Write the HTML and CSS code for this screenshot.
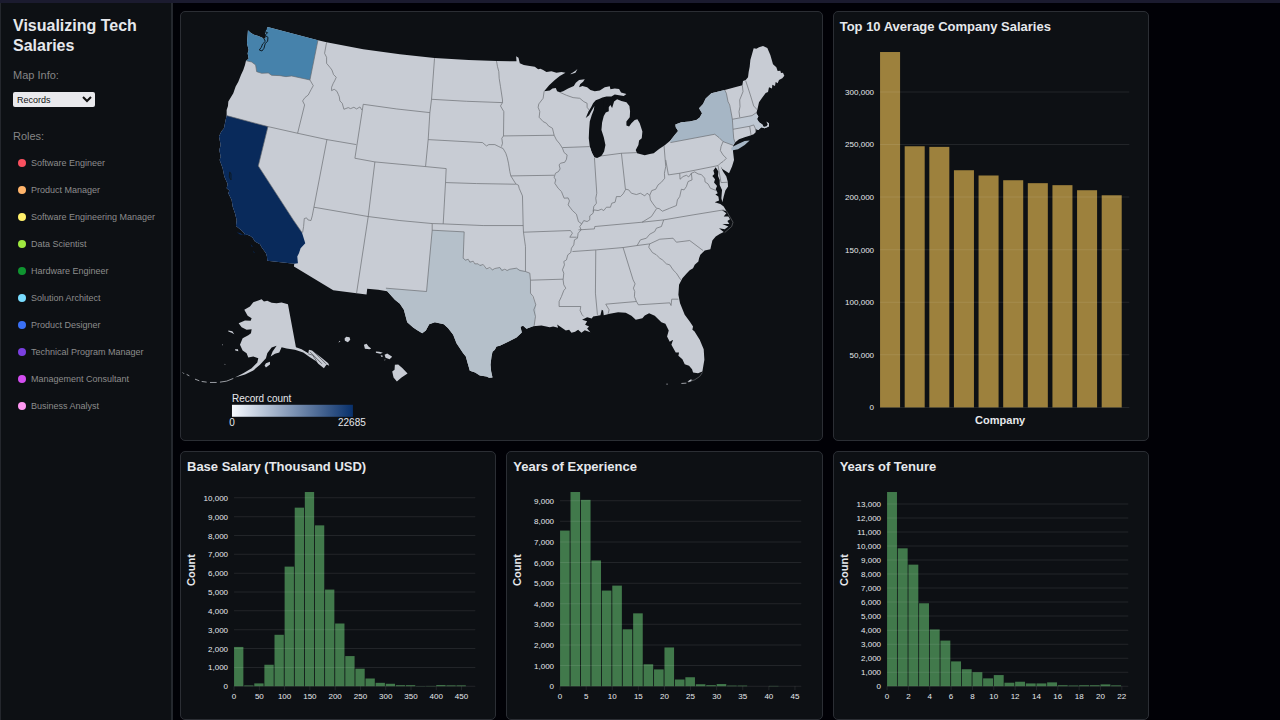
FILE: index.html
```html
<!DOCTYPE html>
<html lang="en">
<head>
<meta charset="utf-8">
<title>Visualizing Tech Salaries</title>
<link rel="stylesheet" href="styles.css">
</head>
<body>
<div class="app">
  <aside class="sidebar">
    <h1 class="app-title">Visualizing Tech Salaries</h1>
    <label class="field-label" for="map-info">Map Info:</label>
    <select class="map-select" id="map-info">
      <option>Records</option>
      <option>Salary</option>
    </select>
    <h2 class="field-label roles-label">Roles:</h2>
    <ul class="roles">
      <li class="role"><span class="dot dot-red"></span>Software Engineer</li>
      <li class="role"><span class="dot dot-orange"></span>Product Manager</li>
      <li class="role"><span class="dot dot-yellow"></span>Software Engineering Manager</li>
      <li class="role"><span class="dot dot-lime"></span>Data Scientist</li>
      <li class="role"><span class="dot dot-green"></span>Hardware Engineer</li>
      <li class="role"><span class="dot dot-cyan"></span>Solution Architect</li>
      <li class="role"><span class="dot dot-blue"></span>Product Designer</li>
      <li class="role"><span class="dot dot-purple"></span>Technical Program Manager</li>
      <li class="role"><span class="dot dot-magenta"></span>Management Consultant</li>
      <li class="role"><span class="dot dot-pink"></span>Business Analyst</li>
    </ul>
  </aside>
  <main class="dashboard">
    <section class="panel panel-map">
      <svg class="chart" viewBox="0 0 641 428" role="img" aria-label="Record count by state">
        <defs>
          <linearGradient id="ramp"><stop offset="0" stop-color="#f7fafe"/><stop offset="1" stop-color="#08306b"/></linearGradient>
        </defs>
        <g transform="translate(-181 -12) scale(0.33333)">
          <path class="land" d="M744,91 752,98 762,104 775,108 787,113 792,118 798,112 796,98 803,81 954,121 980,127 1090,148 1200,163 1304,174 1406,180 1490,183 1550,184 1549,169 1556,173 1560,190 1572,195 1590,198 1605,200 1615,208 1622,206 1630,210 1640,216 1655,214 1670,218 1685,216 1697,218 1680,228 1665,240 1648,256 1633,274 1650,272 1658,266 1668,264 1672,274 1680,277 1690,274 1705,266 1722,258 1728,248 1738,240 1755,238 1750,245 1741,253 1738,262 1748,258 1762,262 1772,270 1785,274 1800,272 1815,262 1830,259 1832,268 1845,266 1858,267 1864,278 1880,282 1872,288 1858,286 1845,284 1835,290 1820,290 1808,293 1798,297 1788,301 1780,310 1774,322 1766,335 1758,354 1768,346 1775,333 1784,318 1782,330 1776,345 1770,365 1768,390 1767,415 1770,440 1776,458 1784,472 1792,474 1805,468 1813,455 1817,435 1812,412 1805,390 1807,368 1812,348 1818,338 1827,334 1827,322 1832,315 1837,324 1843,305 1852,298 1865,303 1880,307 1889,318 1891,335 1890,352 1880,365 1880,377 1888,380 1895,370 1905,360 1913,358 1920,370 1928,395 1926,415 1918,422 1916,435 1908,450 1912,460 1935,466 1950,462 1962,460 1978,447 1995,436 2012,422 2025,405 2035,393 2028,382 2027,374 2045,367 2070,365 2090,360 2100,353 2107,340 2098,325 2110,312 2118,296 2135,280 2175,270 2228,256 2230,243 2238,240 2245,232 2247,215 2250,200 2252,180 2262,145 2270,146 2278,142 2290,138 2303,144 2312,165 2320,193 2330,202 2334,213 2342,212 2344,219 2350,218 2354,227 2348,235 2338,240 2334,250 2328,246 2326,258 2318,254 2317,266 2308,262 2305,276 2298,279 2288,293 2278,307 2274,325 2270,340 2276,350 2272,357 2278,367 2288,374 2292,381 2300,380 2304,374 2300,365 2308,370 2308,380 2295,385 2285,382 2276,390 2268,387 2268,397 2262,403 2252,407 2235,412 2218,418 2206,428 2200,438 2200,455 2203,480 2197,500 2188,520 2180,515 2168,507 2163,500 2170,515 2180,530 2184,545 2185,560 2177,572 2172,590 2168,607 2165,595 2167,570 2160,555 2160,540 2155,528 2156,515 2148,502 2141,512 2144,522 2138,528 2146,538 2143,548 2152,558 2148,568 2154,580 2147,584 2156,590 2158,602 2145,607 2162,612 2172,620 2180,633 2166,630 2180,640 2172,650 2186,650 2191,658 2183,663 2189,672 2168,672 2186,680 2175,688 2158,685 2172,696 2160,702 2148,710 2138,722 2135,735 2132,748 2115,752 2102,765 2098,775 2096,785 2085,795 2080,805 2070,811 2060,822 2048,835 2038,855 2036,885 2041,910 2055,945 2070,965 2080,980 2078,990 2084,994 2100,1020 2112,1048 2114,1080 2108,1115 2095,1120 2080,1118 2077,1108 2068,1098 2055,1093 2048,1078 2036,1068 2038,1058 2028,1058 2015,1035 2020,1020 2010,1026 2002,1010 2007,992 1997,972 1985,967 1965,948 1948,940 1935,947 1928,955 1908,960 1895,948 1878,939 1855,937 1830,942 1812,946 1810,932 1806,930 1802,946 1780,950 1776,956 1762,952 1747,960 1762,964 1756,975 1768,980 1762,986 1772,997 1755,991 1745,999 1735,990 1726,996 1715,999 1708,990 1698,992 1685,983 1672,974 1675,984 1660,980 1650,982 1625,977 1600,979 1580,987 1570,978 1562,981 1566,998 1550,1013 1525,1026 1500,1038 1490,1040 1485,1050 1478,1056 1475,1070 1472,1095 1474,1115 1478,1133 1468,1134 1460,1130 1440,1127 1426,1118 1410,1113 1402,1085 1398,1070 1390,1060 1370,1030 1360,1005 1345,985 1332,973 1305,967 1288,973 1278,992 1267,1000 1250,990 1240,983 1222,967 1216,945 1212,930 1200,912 1185,900 1162,874 1135,870 1102,867 1100,884 1070,880 1000,871 882,800 883,792 802,783 801,770 798,760 785,742 780,733 765,725 758,714 750,708 735,702 725,692 708,678 710,660 705,640 698,620 695,600 685,580 688,572 680,565 683,552 673,530 668,505 659,480 662,470 658,450 662,435 657,410 664,395 672,385 676,365 680,347 680,330 684,318 685,305 700,280 707,260 715,245 723,225 730,210 735,195 738,182 746,176 743,160 746,150 741,130Z"/>
          <path class="mass" d="M2198,358 2257,347 2270,340 2276,350 2272,357 2278,367 2288,374 2292,381 2300,380 2308,380 2295,385 2285,382 2276,390 2270,388 2262,375 2250,379 2200,388Z"/>
          <path class="illinois" d="M1688,443 1770,440 1776,458 1784,474 1791,580 1788,610 1780,635 1772,650 1762,665 1746,672 1736,665 1730,643 1707,620 1707,600 1693,595 1685,575 1665,550 1663,527 1676,515 1678,495 1695,485 1702,465Z"/>
          <path class="texas" d="M1297,691 1393,696 1390,775 1410,783 1425,792 1445,795 1460,807 1485,808 1500,803 1515,812 1530,808 1550,805 1577,815 1590,820 1592,880 1608,915 1607,950 1603,978 1580,987 1570,978 1562,981 1566,998 1550,1013 1525,1026 1500,1038 1490,1040 1485,1050 1478,1056 1475,1070 1472,1095 1474,1115 1478,1133 1468,1134 1460,1130 1440,1127 1426,1118 1410,1113 1402,1085 1398,1070 1390,1060 1370,1030 1360,1005 1345,985 1332,973 1305,967 1288,973 1278,992 1267,1000 1250,990 1240,983 1222,967 1216,945 1212,930 1200,912 1185,900 1162,874 1158,865 1280,875Z"/>
          <path class="newyork" d="M2012,428 2145,403 2158,413 2170,425 2200,436 2206,428 2202,415 2200,388 2198,358 2192,325 2185,305 2180,280 2175,270 2135,280 2118,296 2110,312 2098,325 2107,340 2100,353 2090,360 2070,365 2045,367 2027,374 2028,382 2035,393 2025,405 2012,422ZM2194,444 2196,452 2215,448 2235,435 2250,422 2235,423 2215,432 2200,440Z"/>
          <path class="washington" d="M744,91 752,98 762,104 775,108 787,113 792,118 798,112 796,98 803,81 954,121 930,240 875,228 858,230 840,227 815,226 805,219 785,220 770,215 767,195 755,186 738,182 746,176 743,160 746,150 741,130Z"/>
          <path class="california" d="M680,347 804,380 775,498 880,660 906,698 916,730 902,745 897,760 892,770 894,790 883,792 802,783 801,770 798,760 785,742 780,733 765,725 758,714 750,708 735,702 725,692 708,678 710,660 705,640 698,620 695,600 685,580 688,572 680,565 683,552 673,530 668,505 659,480 662,470 658,450 662,435 657,410 664,395 672,385 676,365ZM710,697l12,3 8,6-10-2zM730,702l10,2-6,3zM752,733l7,7-4,1zM760,752l5,8-4-2z"/>
          <path class="sound" d="M800,88 793,95 803,98 795,106 804,112 803,124 796,130 792,145 786,153 778,150 784,142 788,132 796,124 792,116M689,516l4,6 0,18-5-8z"/>
          <path class="water" d="M1812,300l8-6 6,6-6,14-4,20-8,6 4-16zM1833,292l14,0-8,10z"/>
          <path class="borders" d="M738,182 755,186 767,195 770,215 785,220 805,219 815,226 840,227 858,230 875,228 930,240M954,121 930,240 940,257 934,268 925,285 915,293 908,303 914,315 893,400M680,347 804,380 893,400 981,419 1069,434M804,380 775,498 880,660 906,698M981,419 942,622 937,648 933,662 924,660 920,654 913,656 911,680 908,698M942,622 1105,650 1200,662 1297,671 1330,672 1450,677 1570,677M1125,486 1105,650 1070,880M980,127 974,160 980,172 980,190 990,202 996,210 1001,224 1009,232 1004,243 1000,250 995,262 995,272 1003,268 1011,274 1015,283 1018,290 1020,303 1027,310 1032,328 1045,323 1052,326 1062,322 1070,327 1080,321 1086,330M1290,338 1190,327 1090,313 1065,475 1125,486 1200,493 1277,500 1339,506 1337,548 1330,672M1304,175 1295,298 1290,338 1285,419 1277,500M1295,298 1400,304 1508,308M1285,419 1448,428 1460,438 1467,434 1485,434 1497,440 1510,446 1518,460 1522,472 1526,490 1530,515 1533,528 1548,552 1556,556 1558,565 1568,588 1570,675 1571,697 1577,740 1577,815M1490,183 1493,200 1497,215 1498,235 1502,260 1508,300 1508,308 1502,318 1512,335 1511,408 1506,415 1508,430 1505,440M1511,408 1663,406M1337,548 1430,551 1548,553M1633,274 1630,295 1617,312 1615,322 1620,335 1618,352 1630,365 1640,370 1646,378 1658,385 1663,406 1670,420 1680,432 1688,445 1693,458 1702,465 1700,478 1695,487 1682,490 1678,495 1681,507 1676,515 1667,520 1663,532 1668,540 1665,550 1675,565 1685,575 1693,595 1705,594 1709,603 1705,615 1718,632 1730,643 1736,665 1746,672 1740,680 1744,690 1735,700 1733,715 1724,720 1722,735 1715,745 1713,758 1704,765 1700,780 1692,785 1694,795 1688,810 1692,820 1690,840 1692,855 1698,865 1692,872 1685,890 1678,905 1678,920 1743,920 1741,932 1747,945 1752,950M1533,528 1663,526M1688,443 1770,440M1680,277 1700,286 1720,293 1740,295 1752,305 1762,310 1762,322 1768,330M1784,474 1791,580 1788,595 1790,610 1782,620 1780,635M1746,672 1752,662 1762,665 1770,660 1770,648 1780,640 1782,630 1795,632 1805,628 1812,632 1820,622 1832,622 1836,610 1846,607 1850,590 1862,590 1870,582 1878,568 1887,570 1895,580 1910,584 1922,580 1935,588 1942,580 1950,586 1956,572 1968,568 1975,555 1985,547 1995,535 1994,520 1998,500 1993,438M1865,460 1877,568M1805,468 1865,460 1912,458M1998,480 2006,525 2040,520 2155,497M2012,428 2145,403 2158,413 2170,425 2164,440 2162,452 2170,465 2180,475 2170,485 2162,490 2155,497M2170,425 2200,436M2202,415 2200,388 2198,358 2192,325 2190,315 2185,305 2180,280 2175,270M2228,256 2230,275 2220,300 2221,320 2218,335 2220,352M2238,242 2252,285 2262,318 2273,330M2198,358 2257,347 2270,338M2200,388 2250,379 2262,375 2270,392M2250,379 2254,405M2202,415 2206,428M2040,520 2041,538 2050,530 2060,526 2067,531 2075,520 2085,516 2095,522 2105,524 2115,535 2116,546 2125,552 2132,565 2150,572M2075,520 2077,540 2065,545 2060,560 2053,570 2045,568 2040,590 2033,600 2030,617 2010,625 1988,634 1978,626 1970,625 1960,612 1952,600 1950,586M1970,627 1955,650 1927,667M1736,690 1784,687 1785,680 1927,667 1992,660 2080,645 2172,630M1992,660 1985,680 1970,685 1965,695 1950,703 1940,715 1922,720 1912,737M1718,755 1790,750 1870,743 1912,737 1950,732 1980,718 2020,715 2030,727 2070,722 2110,752M1950,732 1947,742 1958,758 1970,765 1980,775 1988,780 2000,792 2010,795 2020,810 2030,820 2043,840M1870,743 1900,840 1906,852 1901,865 1905,875 1904,890 1910,905 1916,915 2010,909 2014,917 2016,898 2036,898M1910,905 1818,913 1828,930 1825,942M1788,751 1787,880 1793,945M1571,697 1712,692 1718,700 1710,712 1731,712M1592,841 1690,838M1577,815 1590,820 1592,841 1592,880 1600,890 1608,915 1602,930 1607,950 1603,978M1390,775 1397,781 1405,778 1410,787 1420,784 1425,792 1435,792 1440,797 1450,794 1460,807 1470,803 1478,810 1485,806 1500,803 1506,812 1515,808 1522,812 1530,808 1550,805 1560,812 1577,815M1297,671 1297,691 1393,696 1390,775M1297,691 1280,875 1158,865M2155,497 2164,548 2184,547M2180,633 2200,667 2196,680 2175,698"/>
          <path class="land" d="M785,898 792,905 802,903 815,909 830,910 845,908 864,913 888,1042 905,1048 925,1060 927,1050 936,1052 960,1070 985,1090 988,1098 980,1094 972,1105 955,1092 950,1085 930,1072 910,1058 885,1050 860,1046 845,1042 838,1058 825,1062 812,1070 818,1055 830,1038 815,1043 802,1060 798,1075 780,1095 760,1112 735,1124 705,1133 730,1120 755,1105 772,1088 775,1075 760,1070 745,1073 740,1060 728,1052 720,1035 728,1015 745,1006 753,1000 755,988 740,990 725,982 716,970 735,962 752,963 755,955 743,948 733,930 750,920 760,907 775,902ZM798,1090l12-4 0,8-12,9-4-6zM685,992l12,2 6,9-8-4-10-4zM705,1048l9,0 1,6-9-2zM666,1033l3,2-2,2zM674,1092l3,3-3,0z"/>
          <path class="islands" d="M700,1136 680,1144 660,1147M650,1148 630,1148M620,1147 605,1145M598,1143 585,1138M568,1128 560,1124M552,1122 548,1118M2000,1153h4M2045,1151 2060,1150"/>
          <path class="keys" d="M2065,1147 2085,1140 2100,1130 2108,1118"/>
          <path class="land" d="M2063,1146 2072,1139 2078,1140 2071,1146ZM1712,222l14-9 7-6-6,11-14,5zM1034,1016l5-5 10,1 2,8-7,7-9-4zM1015,1028l5-5 1,3zM1092,1035l8-3 6,8 8,6-5,2-14-1zM1128,1055l10,1 11,3-8,3-13-3zM1142,1067l5-1 2,5-5,0zM1154,1065l8-4 15,10-8,7-12-4zM1153,1080l5,0-4,2zM1185,1095 1195,1094 1208,1105 1223,1121 1205,1133 1191,1145 1181,1133 1177,1115 1184,1110Z"/>
          <path class="channels" d="M930,1056 952,1078 966,1092M938,1052 960,1074 978,1092M925,1062 938,1066 950,1084"/>
        </g>
        <text class="legend-text" x="51" y="390">Record count</text>
        <rect x="51" y="393" width="121" height="12" fill="url(#ramp)"/>
        <text class="legend-text middle" x="51" y="414">0</text>
        <text class="legend-text middle" x="171" y="414">22685</text>
      </svg>
    </section>
    <section class="panel">
      <h2 class="panel-title">Top 10 Average Company Salaries</h2>
      <svg class="chart" id="companies" viewBox="0 0 314 404"></svg>
    </section>
    <section class="panel">
      <h2 class="panel-title">Base Salary (Thousand USD)</h2>
      <svg class="chart" id="salary" viewBox="0 0 314 242"></svg>
    </section>
    <section class="panel">
      <h2 class="panel-title">Years of Experience</h2>
      <svg class="chart" id="experience" viewBox="0 0 314 242"></svg>
    </section>
    <section class="panel">
      <h2 class="panel-title">Years of Tenure</h2>
      <svg class="chart" id="tenure" viewBox="0 0 314 242"></svg>
    </section>
  </main>
</div>
<script src="charts.js"></script>
</body>
</html>
```
FILE: styles.css
```css
* { box-sizing: border-box; }

body {
  margin: 0;
  background: #010106;
  color: #e6e8ec;
  font-family: "Liberation Sans", Arial, sans-serif;
}

.app {
  display: flex;
  min-height: 100vh;
  border-top: 3px solid #1b1b2f;
}

.sidebar {
  flex: 0 0 173px;
  padding: 13px 8px 12px 12px;
  background: #0d1014;
  border-left: 1px solid #24272d;
  border-right: 2px solid #24272d;
}

.app-title {
  margin: 0 0 12px;
  font-size: 16px;
  line-height: 20px;
}

.field-label {
  display: block;
  margin: 0;
  font-size: 11px;
  font-weight: 400;
  line-height: 14px;
  color: #858585;
}

.roles-label { margin-top: 22px; }

.map-select {
  display: block;
  width: 82px;
  height: 15px;
  margin-top: 10px;
  padding: 0;
  border: 0;
  border-radius: 2px;
  background: #e9e9ed;
  color: #111;
  font-family: inherit;
  font-size: 9px;
}

.roles {
  margin: 6px 0 0;
  padding: 0 0 0 5px;
  list-style: none;
}

.role {
  display: flex;
  align-items: center;
  gap: 5px;
  height: 27px;
  font-size: 9px;
  white-space: nowrap;
  color: #8c8c8c;
}

.dot {
  width: 8px;
  height: 8px;
  border-radius: 50%;
}

.dot-red { background: #f9505f; }
.dot-orange { background: #ffb46b; }
.dot-yellow { background: #fff06b; }
.dot-lime { background: #9ee83f; }
.dot-green { background: #0f9430; }
.dot-cyan { background: #79dcff; }
.dot-blue { background: #3a70f5; }
.dot-purple { background: #7a3fe0; }
.dot-magenta { background: #d34df0; }
.dot-pink { background: #ff97f2; }

.dashboard {
  display: grid;
  grid-template-columns: repeat(3, 1fr);
  gap: 10px;
  flex: 1;
  align-content: start;
  max-width: 976px;
  padding: 8px 0 0 7px;
}

.panel {
  background: #0d1014;
  border: 1px solid #2b2e34;
  border-radius: 5px;
}

.panel-map { grid-column: span 2; }

.panel-title {
  margin: 0;
  padding: 6px 6px 0;
  font-size: 13px;
  line-height: 18px;
}

.chart {
  display: block;
  width: 100%;
}

.land { fill: #c8ccd4; }
.mass { fill: #bfc8d3; }
.illinois { fill: #c3c8d1; }
.texas { fill: #b5c0ca; }
.newyork { fill: #a6b6c5; }
.washington { fill: #4682ab; }
.california { fill: #092a5b; }
.water { fill: #0d1014; }
.sound { fill: none; stroke: #0d1a24; stroke-width: 3; }
.borders { fill: none; stroke: #66696e; stroke-width: 2; stroke-linejoin: round; }
.islands { fill: none; stroke: #9a9da3; stroke-width: 3; }
.keys { fill: none; stroke: #6b6e73; stroke-width: 2; }
.channels { fill: none; stroke: #3a3d42; stroke-width: 2; }

.legend-text { fill: #e6e8ec; font-size: 10px; }
.middle { text-anchor: middle; }

.grid-line { stroke: #ffffff; stroke-opacity: 0.09; }
.axis-label { fill: #e6e8ec; font-size: 8px; }
.axis-label-y { text-anchor: end; }
.axis-label-x { text-anchor: middle; }
.axis-title { fill: #e6e8ec; font-size: 11px; font-weight: 700; text-anchor: middle; }
.bar-company { fill: #9d813d; }
.bar-count { fill: #41794b; }
```
FILE: charts.js
```js
const NS = "http://www.w3.org/2000/svg";

function add(parent, name, attrs, text) {
  const node = document.createElementNS(NS, name);
  for (const key in attrs) node.setAttribute(key, attrs[key]);
  if (text !== undefined) node.textContent = text;
  parent.appendChild(node);
  return node;
}

function drawChart(id, o) {
  const svg = document.getElementById(id);
  const max = Math.max(...o.values);
  const y = v => o.base - (v / max) * (o.base - o.top);

  o.values.forEach((v, i) => {
    add(svg, "rect", {
      class: o.barClass, x: o.left + i * o.step, y: y(v),
      width: o.barWidth, height: o.base - y(v)
    });
  });

  for (let v = 0; v <= max; v += o.yTick) {
    add(svg, "line", { class: "grid-line", x1: o.left, x2: o.right, y1: y(v), y2: y(v) });
    add(svg, "text", { class: "axis-label axis-label-y", x: o.left - 6, y: y(v) + 3 }, v.toLocaleString("en-US"));
  }

  if (o.xTick) {
    for (let v = 0; v <= o.xMax; v += o.xTick) {
      const x = o.left + (v / o.bin) * o.step;
      add(svg, "line", { class: "grid-line", x1: x, x2: x, y1: o.base, y2: o.base + 4 });
      add(svg, "text", { class: "axis-label axis-label-x", x: x, y: o.base + 13 }, v);
    }
    add(svg, "text", { class: "axis-title", transform: "translate(14 94) rotate(-90)" }, "Count");
  } else {
    add(svg, "text", { class: "axis-title", x: o.titleX, y: o.base + 17 }, "Company");
  }
}

drawChart("companies", {
  values: [337900, 248300, 247700, 225500, 220500, 216000, 213200, 211300, 206500, 201700],
  left: 46, right: 295, top: 16, base: 371, step: 24.6, barWidth: 20,
  titleX: 166, yTick: 50000, barClass: "bar-company"
});

const histogram = { left: 53, right: 294, top: 16, base: 210, barClass: "bar-count", yTick: 1000 };

drawChart("salary", {
  ...histogram, bin: 20, step: 10.1, barWidth: 9.3, xTick: 50, xMax: 450,
  values: [2085, 40, 150, 1140, 2730, 6350, 9480, 10310, 8540, 5130, 3330, 1600, 930, 410, 180, 130, 55, 55, 10, 15, 60, 45, 45]
});

drawChart("experience", {
  ...histogram, bin: 2, step: 10.43, barWidth: 9.6, xTick: 5, xMax: 45,
  values: [7550, 9420, 9040, 6100, 4640, 4880, 2760, 3535, 1065, 815, 1880, 325, 435, 95, 50, 105, 30, 30, 0, 0, 15]
});

drawChart("tenure", {
  ...histogram, bin: 1, step: 10.66, barWidth: 9.9, xTick: 2, xMax: 22,
  values: [13850, 9835, 8670, 5915, 4050, 3255, 1770, 1210, 1000, 560, 795, 250, 320, 200, 200, 275, 70, 50, 70, 70, 130, 60]
});
```
